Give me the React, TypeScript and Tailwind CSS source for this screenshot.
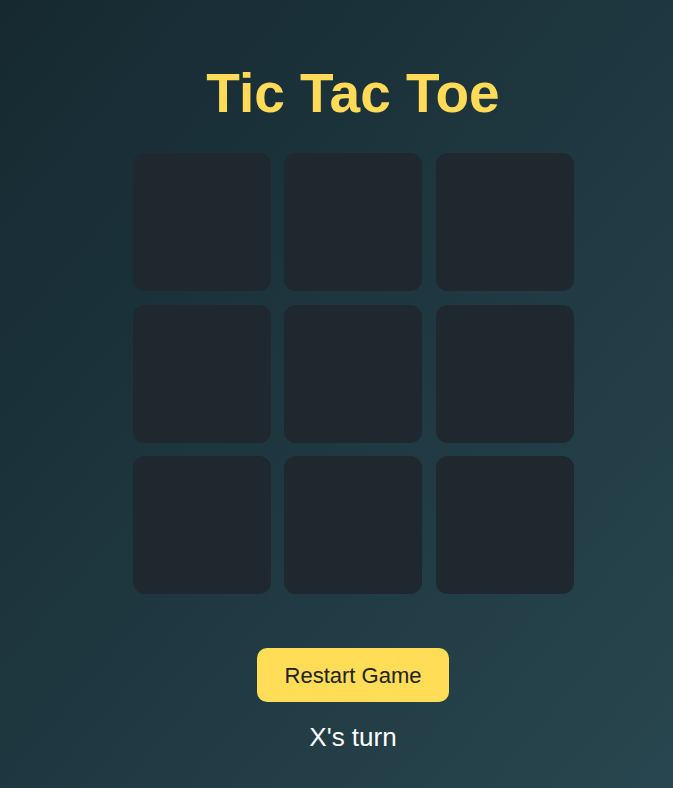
import React, { useState } from 'react';

const App: React.FC = () => {
  const [cells, setCells] = useState<(string | null)[]>(Array(9).fill(null));
  const [xNext, setXNext] = useState(true);

  const play = (i: number) => {
    if (cells[i]) return;
    const next = cells.slice();
    next[i] = xNext ? 'X' : 'O';
    setCells(next);
    setXNext(!xNext);
  };

  const restart = () => {
    setCells(Array(9).fill(null));
    setXNext(true);
  };

  return (
    <div className="min-h-screen w-full bg-gradient-to-br from-[#162931] to-[#28464f] font-['Liberation_Sans',Arial,sans-serif] pl-[33px]">
      <div className="flex flex-col items-center pt-[62px]">
        {/* Title */}
        <h1 className="text-[55px] leading-[63px] font-bold text-[#ffdb58]">Tic Tac Toe</h1>

        {/* Board */}
        <div className="grid grid-cols-[repeat(3,138px)] auto-rows-[138px] gap-[13.5px] mt-[28px]">
          {cells.map((c, i) => (
            <button
              key={i}
              onClick={() => play(i)}
              className="bg-[#1f272f] rounded-[12px] text-6xl font-bold text-[#ffdb58] flex items-center justify-center"
            >
              {c}
            </button>
          ))}
        </div>

        <button
          onClick={restart}
          className="mt-[54px] w-[192px] h-[54px] bg-[#ffdd57] rounded-[10px] text-[22px] text-[#222222]"
        >
          Restart Game
        </button>

        <p className="mt-[20px] text-[26px] leading-[30px] text-white">{xNext ? 'X' : 'O'}'s turn</p>
      </div>
    </div>
  );
};

export default App;
